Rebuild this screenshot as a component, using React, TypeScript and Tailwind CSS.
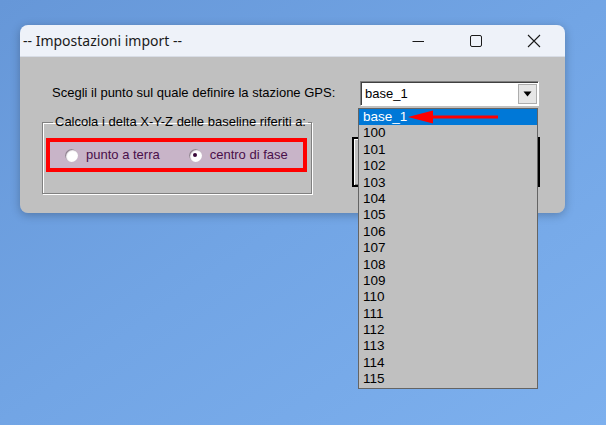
import React from "react";

const items = [
  "base_1", "100", "101", "102", "103", "104", "105", "106", "107",
  "108", "109", "110", "111", "112", "113", "114", "115",
];

export default function App() {
  return (
    <div className="relative w-[606px] h-[425px] overflow-hidden bg-gradient-to-br from-[#6697d8] via-[#72a5e5] to-[#7db0ee] font-['Liberation_Sans',Arial,sans-serif]">
      {/* dialog window */}
      <div className="absolute left-[20px] top-[25px] w-[545px] h-[188px] flex flex-col rounded-[8px] overflow-hidden shadow-[0_2px_10px_rgba(0,0,0,0.25)]">
        <div className="h-[32px] shrink-0 flex items-center bg-[#eef2f9] border-b border-[#d8dde6]">
          <span className="pl-[3px] text-[14px] text-[#1a1a1a] font-['Noto_Sans',sans-serif]">
            -- Impostazioni import --
          </span>
          <div className="ml-auto flex items-center h-full pr-[2px]">
            <TitleButton>
              <svg width="12" height="12" viewBox="0 0 12 12">
                <path d="M0.5 6.5h12" stroke="#1a1a1a" strokeWidth="1" />
              </svg>
            </TitleButton>
            <TitleButton>
              <svg width="12" height="12" viewBox="0 0 12 12">
                <rect x="0.5" y="0.5" width="11" height="11" rx="1.5" fill="none" stroke="#1a1a1a" strokeWidth="1" />
              </svg>
            </TitleButton>
            <TitleButton>
              <svg width="14" height="14" viewBox="0 0 14 14">
                <path d="M1 1l12 12M13 1L1 13" stroke="#1a1a1a" strokeWidth="1.1" />
              </svg>
            </TitleButton>
          </div>
        </div>

        <div className="flex-1 bg-[#c0c0c0] text-[13px] text-black">
          {/* station row */}
          <div className="flex items-center pt-[24px] pl-[32px] pr-[27px]">
            <span className="leading-[24px]">Scegli il punto sul quale definire la stazione GPS:</span>
            <div className="ml-auto w-[178px] h-[24px] flex items-center bg-white border-t border-l border-[#808080] shadow-[inset_1px_1px_0_#404040,1px_1px_0_#ffffff]">
              <span className="pl-[4px] leading-[20px]">base_1</span>
              <div className="ml-auto mr-[1px] w-[19px] h-[20px] flex items-center justify-center bg-[#e6e6e6] border border-[#adadad]">
                <svg width="9" height="6" viewBox="0 0 9 6">
                  <path d="M0.5 0.5h8l-4 5z" fill="#000" />
                </svg>
              </div>
            </div>
          </div>

          {/* group box + default button */}
          <div className="flex items-start pl-[22px] mt-[9px]">
            <fieldset className="w-[270px] h-[80px] border border-[#808080] shadow-[inset_1px_1px_0_#ffffff,1px_1px_0_#ffffff] px-[3px]">
              <legend className="ml-[7px] px-[2px] leading-[16px]">
                Calcola i delta X-Y-Z delle baseline riferiti a:
              </legend>
              <div className="mt-[8px] w-[261px] h-[34px] flex items-center border-[4px] border-[#ff0000] bg-[#c8b4c8] text-[#4a0f4a]">
                <Radio label="punto a terra" />
                <div className="w-[14px]" />
                <Radio label="centro di fase" checked />
              </div>
            </fieldset>
            <div className="ml-[40px] mt-[23px] w-[188px] h-[50px] border-2 border-black bg-[#c0c0c0] shadow-[inset_1px_1px_0_#ffffff,inset_-1px_-1px_0_#808080]" />
          </div>
        </div>
      </div>

      {/* opened dropdown list */}
      <div className="absolute left-[358px] top-[108px] w-[180px] border border-[#646464] bg-[#c0c0c0] text-[13.5px] text-black">
        {items.map((it, i) => (
          <div
            key={it}
            className={
              i === 0
                ? "h-[16.4px] leading-[16.4px] pl-[4px] bg-[#0078d7] text-white"
                : "h-[16.4px] leading-[16.4px] pl-[4px]"
            }
          >
            {it}
          </div>
        ))}
      </div>

      {/* red arrow */}
      <svg className="absolute left-[405px] top-[109px]" width="96" height="16" viewBox="0 0 96 16">
        <path d="M3 8 L28 1.5 L28 14.5 Z" fill="#ff0000" />
        <path d="M26 8 H93" stroke="#ff0000" strokeWidth="3" />
      </svg>
    </div>
  );
}

function TitleButton({ children }: { children: React.ReactNode }) {
  return <div className="w-[58px] h-full flex items-center justify-center">{children}</div>;
}

function Radio({ label, checked = false }: { label: string; checked?: boolean }) {
  return (
    <div className="flex items-center">
      <div className="ml-[15px] w-[13px] h-[13px] rounded-full flex items-center justify-center bg-[radial-gradient(circle_at_60%_60%,#ffffff_45%,#d8d0d8_100%)] shadow-[inset_1px_1px_1px_#8a7a8a]">
        {checked && <div className="w-[4px] h-[4px] rounded-full bg-[#3a0a3a]" />}
      </div>
      <span className="ml-[8px]">{label}</span>
    </div>
  );
}
